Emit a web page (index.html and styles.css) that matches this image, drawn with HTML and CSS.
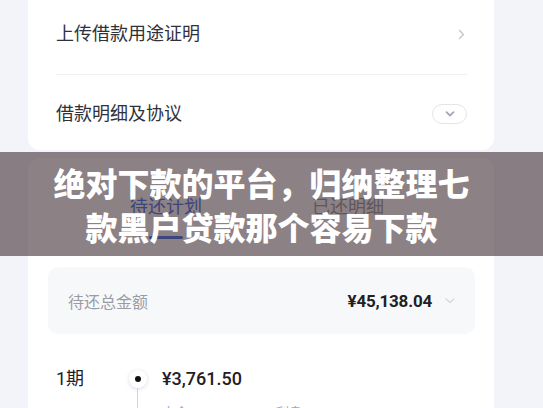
FILE: index.html
```html
<!DOCTYPE html>
<html lang="zh-CN">
<head>
<meta charset="utf-8">
<title>借款详情</title>
<link rel="stylesheet" href="styles.css">
</head>
<body>
<div class="page">
  <section class="card card-top">
    <div class="row row-first">
      <span class="row-label">上传借款用途证明</span>
      <svg class="chev-right" width="7" height="11" viewBox="0 0 7 11"><path d="M1.5 1.5 L5.5 5.5 L1.5 9.5" fill="none" stroke="#c3c6cf" stroke-width="1.4" stroke-linecap="round" stroke-linejoin="round"/></svg>
    </div>
    <div class="row row-second">
      <span class="row-label">借款明细及协议</span>
      <span class="pill">
        <svg width="10" height="6" viewBox="0 0 10 6"><path d="M1.5 1.2 L5 4.5 L8.5 1.2" fill="none" stroke="#a3a7b8" stroke-width="1.8" stroke-linecap="round" stroke-linejoin="round"/></svg>
      </span>
    </div>
  </section>

  <section class="card card-plan">
    <nav class="tabs">
      <div class="tab tab-active">待还计划<span class="tab-bar"></span></div>
      <div class="tab">已还明细</div>
    </nav>
    <div class="summary">
      <span class="summary-label">待还总金额</span>
      <span class="summary-value">¥45,138.04</span>
      <svg class="chev-down" width="10" height="6" viewBox="0 0 10 6"><path d="M1 1 L5 4.5 L9 1" fill="none" stroke="#d3d6dd" stroke-width="1.2" stroke-linecap="round" stroke-linejoin="round"/></svg>
    </div>
    <div class="plan">
      <div class="plan-term">1期</div>
      <div class="plan-axis"><span class="dot"></span><span class="axis-line"></span></div>
      <div class="plan-amount">¥3,761.50</div>
      <div class="plan-date">2024/03/15</div>
      <div class="plan-axis-fill"></div>
      <div class="plan-detail"><span>本金 ¥3,333.33</span><span>利息 ¥428.17</span></div>
    </div>
  </section>
</div>

<div class="banner">
  <h1 class="banner-title">绝对下款的平台，归纳整理七<br>款黑户贷款那个容易下款</h1>
</div>
</body>
</html>
```

FILE: styles.css
```css
* { box-sizing: border-box; }

html, body {
  margin: 0;
  padding: 0;
}

body {
  background: #f2f4fa;
  font-family: Roboto, "Noto Sans CJK SC", sans-serif;
  color: #2a2c33;
  width: 543px;
  height: 408px;
  overflow: hidden;
  position: relative;
}

.page {
  padding-left: 28px;
  width: 494px;
}

.card {
  background: #ffffff;
  width: 466px;
}

.card-top {
  border-radius: 0 0 12px 12px;
  padding: 0 27px 0 28px;
}

.row {
  display: flex;
  align-items: center;
  justify-content: space-between;
}

.row-label {
  font-size: 18px;
  line-height: 20px;
  color: #30323a;
}

.row-first {
  padding: 24px 0 30px;
  border-bottom: 1px solid #eef0f3;
}

.row-second {
  padding: 29px 0 26px;
}

.chev-right {
  margin-right: 2px;
  display: block;
}

.pill {
  width: 35px;
  height: 20px;
  border: 1px solid #e3e5ec;
  border-radius: 10px;
  display: flex;
  align-items: center;
  justify-content: center;
}

.pill svg { display: block; }

.card-plan {
  margin-top: 8px;
  border-radius: 12px 12px 0 0;
  padding: 0 19px 0 20px;
  height: 260px;
}

.tabs {
  display: flex;
  padding-top: 37px;
  padding-left: 82px;
  gap: 110px;
}

.tab {
  font-size: 18px;
  line-height: 24px;
  color: #8d9099;
  display: flex;
  flex-direction: column;
  align-items: center;
}

.tab-active {
  color: #2d64e6;
}

.tab-bar {
  width: 34px;
  height: 3px;
  border-radius: 2px;
  background: #2d64e6;
  margin-top: 17px;
}

.summary {
  margin-top: 28px;
  height: 67px;
  border-radius: 10px;
  background: #f7f8fa;
  display: flex;
  align-items: center;
  padding: 0 20px;
}

.summary-label {
  font-size: 16px;
  color: #9a9ca3;
  flex: 1;
}

.summary-value {
  font-size: 17px;
  font-weight: 700;
  color: #1f2026;
  letter-spacing: -0.2px;
}

.chev-down {
  margin-left: 13px;
  margin-right: 0;
  display: block;
}

.plan {
  display: grid;
  grid-template-columns: 72px 20px auto;
  column-gap: 0;
  padding: 34px 0 0 8px;
  align-items: center;
}

.plan-term {
  font-size: 18px;
  line-height: 22px;
  color: #1f2026;
}

.plan-axis {
  position: relative;
  height: 22px;
  display: flex;
  justify-content: center;
  align-items: center;
}

.dot {
  width: 18px;
  height: 18px;
  border-radius: 50%;
  background: #fff;
  box-shadow: 0 1px 4px rgba(40, 60, 120, 0.18);
  display: flex;
  align-items: center;
  justify-content: center;
}

.dot::after {
  content: "";
  width: 6px;
  height: 6px;
  border-radius: 50%;
  background: #111;
}

.axis-line {
  position: absolute;
  left: 9px;
  top: 20px;
  width: 1px;
  height: 40px;
  background: #cfd3dc;
}

.plan-amount {
  padding-left: 14px;
  font-size: 18px;
  line-height: 22px;
  font-weight: 500;
  color: #1f2026;
}

.plan-date,
.plan-detail {
  margin-top: 14px;
  font-size: 13px;
  line-height: 18px;
  color: #a3a5ad;
}

.plan-detail {
  padding-left: 14px;
  display: flex;
  gap: 28px;
}

.banner {
  position: absolute;
  left: 0;
  top: 152px;
  width: 543px;
  height: 104px;
  background: rgba(70, 52, 56, 0.62);
  padding: 8px 20px 8px 0;
}

.banner-title {
  margin: 0;
  text-align: center;
  font-size: 32px;
  line-height: 44px;
  font-weight: 900;
  color: #ffffff;
  font-family: "Noto Sans CJK SC", sans-serif;
}
```
